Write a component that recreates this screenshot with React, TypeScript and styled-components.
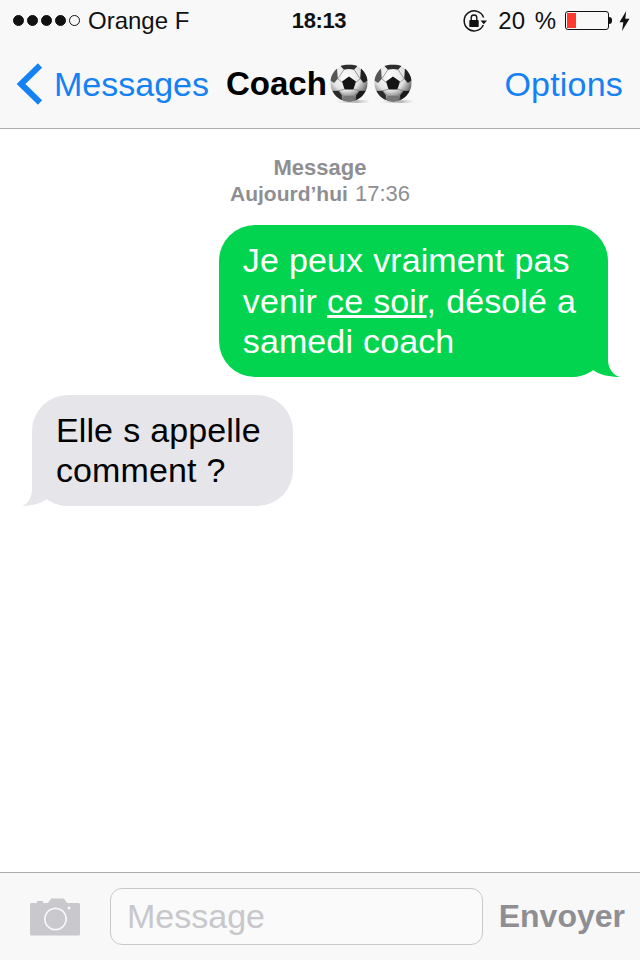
import React from 'react';
import styled, { createGlobalStyle } from 'styled-components';

const GlobalStyle = createGlobalStyle`
  html, body {
    margin: 0;
    padding: 0;
    background: #fff;
  }
  body {
    font-family: "Liberation Sans", Arial, sans-serif;
  }
`;

const Ball: React.FC = () => (
  <BallSvg viewBox="0 0 40 42" width="40" height="42">
    <defs>
      <radialGradient id="ballShade" cx="42%" cy="32%" r="70%">
        <stop offset="0%" stopColor="#ffffff" />
        <stop offset="55%" stopColor="#e4e4e4" />
        <stop offset="85%" stopColor="#808080" />
        <stop offset="100%" stopColor="#3a3a3a" />
      </radialGradient>
      <linearGradient id="ballFloor" x1="0" y1="0" x2="1" y2="0">
        <stop offset="0%" stopColor="#bbb" stopOpacity="0" />
        <stop offset="60%" stopColor="#999" stopOpacity="0.7" />
        <stop offset="100%" stopColor="#bbb" stopOpacity="0" />
      </linearGradient>
    </defs>
    <rect x="6" y="36" width="34" height="3" fill="url(#ballFloor)" />
    <circle cx="19" cy="19" r="18.5" fill="url(#ballShade)" />
    <path d="M19 12.500l7 5-2.600 8h-8.800l-2.600-8z" fill="#141414" />
    <path d="M10.500 2C14 .4 24 .4 27.500 2l-3.500 3.800c-3-1-7-1-10 0z" fill="#2e2e2e" />
    <path d="M31 4.400c3.600 3 6 7.400 6.500 12l-3.600 2.600-3.700-4.200z" fill="#202020" />
    <path d="M7 4.400C3.400 7.400 1 11.800.5 16.400l3.600 2.600 3.700-4.200z" fill="#555" />
    <path d="M2.500 27c1.800 3.800 5 7 9 9l.5-4.500-3.500-4.800z" fill="#2a2a2a" />
    <path d="M35.500 27c-1.800 3.800-5 7-9 9l-.5-4.500 3.500-4.800z" fill="#1a1a1a" />
    <path d="M13 36.800c4 1.200 8 1.200 12 0l-.5-5-11 0z" fill="#777" />
    <path d="M14 5.400l-6.200 9.400 5 4.200M24 5.400l6.200 9.400-5 4.200M8.500 26.700l5.800-1.400M29.500 26.700l-5.800-1.400M13.500 31.500l-5-4.800M24.500 31.500l5-4.800" stroke="#777" strokeWidth="0.7" fill="none" />
  </BallSvg>
);

const App: React.FC = () => (
  <Page>
    <GlobalStyle />
    <Header>
      <StatusBar>
        <Carrier>
          <Signal>
            <Dot $filled />
            <Dot $filled />
            <Dot $filled />
            <Dot $filled />
            <Dot />
          </Signal>
          <span>Orange F</span>
        </Carrier>
        <Clock>18:13</Clock>
        <StatusRight>
          <svg width="24" height="22" viewBox="0 0 24 22">
            <path d="M20.600 7.500A10 10 0 1 0 20.300 15" fill="none" stroke="#111" strokeWidth="1.500" />
            <path d="M17.500 10.500h6.500l-3.200 3.800z" fill="#111" />
            <rect x="6.300" y="10" width="9.400" height="7" rx="0.800" fill="#111" />
            <path d="M8.200 10V7.800a2.800 2.800 0 0 1 5.600 0V10" fill="none" stroke="#111" strokeWidth="1.400" />
          </svg>
          <Percent>20 %</Percent>
          <Battery>
            <BatteryFill />
          </Battery>
          <BatteryTip />
          <svg width="11" height="20" viewBox="0 0 11 20">
            <path d="M7.200 0L.500 11.200h3.800L3 20l7.500-12.200H6.300z" fill="#111" />
          </svg>
        </StatusRight>
      </StatusBar>
      <NavBar>
        <BackLink>
          <svg width="28" height="42" viewBox="0 0 28 42">
            <path d="M25 2.500L6 21 25 39.500" fill="none" stroke="#1481f4" strokeWidth="6" />
          </svg>
          <span>Messages</span>
        </BackLink>
        <Title>
          Coach
          <Ball />
          <Ball />
        </Title>
        <OptionsLink>Options</OptionsLink>
      </NavBar>
    </Header>

    <Thread>
      <Stamp>
        <StampTitle>Message</StampTitle>
        <StampTime>
          <StampDay>Aujourd’hui</StampDay> 17:36
        </StampTime>
      </Stamp>
      <Bubble $mine>
        Je peux vraiment pas
        <br />
        venir <u>ce soir</u>, désolé a
        <br />
        samedi coach
        <TailRight viewBox="0 0 48 36" width="48" height="36">
          <path d="M0 36C8 36 15 33 21 29 28 34 38 36 48 36 42 35 36 28 36 19L36 0 0 0z" fill="#02d44f" />
        </TailRight>
      </Bubble>
      <Bubble>
        Elle s appelle
        <br />
        comment ?
        <TailLeft viewBox="0 0 48 36" width="48" height="36">
          <path d="M48 36C40 36 33 33 27 29 20 34 10 36 2 36 7 35 12 28 12 19L12 0 48 0z" fill="#e5e5ea" />
        </TailLeft>
      </Bubble>
    </Thread>

    <Toolbar>
      <svg width="50" height="38" viewBox="0 0 50 38">
        <path
          fillRule="evenodd"
          d="M1 5h6V3h6v2h5l3-4.500h13L37 5h11.500q1.500 0 1.500 1.500V36q0 1.500-1.500 1.500H1.500Q0 37.500 0 36V6.500Q0 5 1 5zM25.500 9.500a11.500 11.500 0 1 0 .01 0zM25.500 11.200a9.800 9.800 0 1 1-.01 0zM39 8.500a1.500 1.500 0 1 0 .01 0z"
          fill="#c8c8cd"
        />
      </svg>
      <MessageInput>Message</MessageInput>
      <SendLabel>Envoyer</SendLabel>
    </Toolbar>
  </Page>
);

export default App;

const Page = styled.div`
  width: 640px;
  height: 960px;
  display: flex;
  flex-direction: column;
  overflow: hidden;
  background: #fff;
`;

const Header = styled.header`
  height: 128px;
  background: #f8f8f8;
  border-bottom: 1px solid #acacac;
  flex-shrink: 0;
`;

const StatusBar = styled.div`
  height: 40px;
  box-sizing: border-box;
  display: grid;
  grid-template-columns: 1fr auto 1fr;
  align-items: center;
  padding: 1px 10px 0 13px;
  font-size: 24px;
  color: #111;
`;

const Carrier = styled.div`
  display: flex;
  align-items: center;
  gap: 8px;
`;

const Signal = styled.div`
  display: flex;
  gap: 3px;
`;

const Dot = styled.span<{ $filled?: boolean }>`
  width: 11px;
  height: 11px;
  box-sizing: border-box;
  border-radius: 50%;
  border: 1px solid #111;
  background: ${(p) => (p.$filled ? '#111' : 'transparent')};
`;

const Clock = styled.div`
  margin-right: 5px;
  font-weight: 700;
  font-size: 22px;
  letter-spacing: -0.4px;
`;

const StatusRight = styled.div`
  display: flex;
  align-items: center;
  justify-content: flex-end;
`;

const Percent = styled.span`
  margin: 0 9px 0 11px;
  word-spacing: 3px;
`;

const Battery = styled.div`
  width: 44px;
  height: 19px;
  box-sizing: border-box;
  padding: 1px;
  border: 1px solid #111;
  border-radius: 3px;
`;

const BatteryFill = styled.div`
  width: 9px;
  height: 100%;
  background: #ff3b30;
`;

const BatteryTip = styled.div`
  width: 3px;
  height: 7px;
  margin: 0 7px 0 0;
  background: #111;
  border-radius: 0 3px 3px 0;
`;

const NavBar = styled.nav`
  height: 88px;
  display: flex;
  align-items: center;
  padding: 0 17px 0 15px;
  font-size: 34px;
`;

const BackLink = styled.div`
  display: flex;
  align-items: center;
  gap: 11px;
  color: #1481f4;
`;

const Title = styled.div`
  display: flex;
  align-items: center;
  margin-left: 17px;
  font-size: 33px;
  font-weight: 700;
  color: #000;
`;

const BallSvg = styled.svg`
  display: block;
  flex-shrink: 0;
  margin-left: 3px;
  margin-top: 2px;
  &:last-child {
    margin-left: 4px;
  }
`;

const OptionsLink = styled.div`
  margin-left: auto;
  letter-spacing: 0.2px;
  color: #1481f4;
`;

const Thread = styled.main`
  flex: 1;
  display: flex;
  flex-direction: column;
  align-items: flex-start;
  padding: 26px 32px 0;
`;

const Stamp = styled.div`
  align-self: stretch;
  height: 70px;
  text-align: center;
  font-size: 22px;
  line-height: 26px;
  color: #8e8e93;
`;

const StampTitle = styled.div`
  font-weight: 700;
`;

const StampTime = styled.div`
  word-spacing: 1px;
`;

const StampDay = styled.span`
  font-size: 21px;
  font-weight: 700;
`;

const Bubble = styled.div<{ $mine?: boolean }>`
  position: relative;
  isolation: isolate;
  box-sizing: border-box;
  padding: 15px 32px 15px 24px;
  margin-bottom: 18px;
  border-radius: 36px;
  font-size: 34px;
  line-height: 40.500px;
  letter-spacing: 0.100px;
  word-spacing: 0.500px;
  white-space: nowrap;
  align-self: ${(p) => (p.$mine ? 'flex-end' : 'flex-start')};
  color: ${(p) => (p.$mine ? '#fff' : '#000')};
  background: ${(p) => (p.$mine ? '#02d44f' : '#e5e5ea')};
`;

const TailRight = styled.svg`
  position: absolute;
  z-index: -1;
  right: -12px;
  bottom: 0;
`;

const TailLeft = styled.svg`
  position: absolute;
  z-index: -1;
  left: -12px;
  bottom: 0;
`;

const Toolbar = styled.footer`
  height: 88px;
  flex-shrink: 0;
  box-sizing: border-box;
  display: flex;
  align-items: center;
  padding: 0 15px 0 30px;
  background: #f8f8f8;
  border-top: 1px solid #acacac;
`;

const MessageInput = styled.div`
  width: 373px;
  height: 57px;
  box-sizing: border-box;
  margin-left: 30px;
  padding-left: 16px;
  display: flex;
  align-items: center;
  background: #fafafa;
  border: 1px solid #c8c8cd;
  border-radius: 12px;
  font-size: 34px;
  color: #c7c7cc;
`;

const SendLabel = styled.div`
  margin-left: auto;
  font-weight: 700;
  font-size: 32px;
  color: #8e8e93;
`;
